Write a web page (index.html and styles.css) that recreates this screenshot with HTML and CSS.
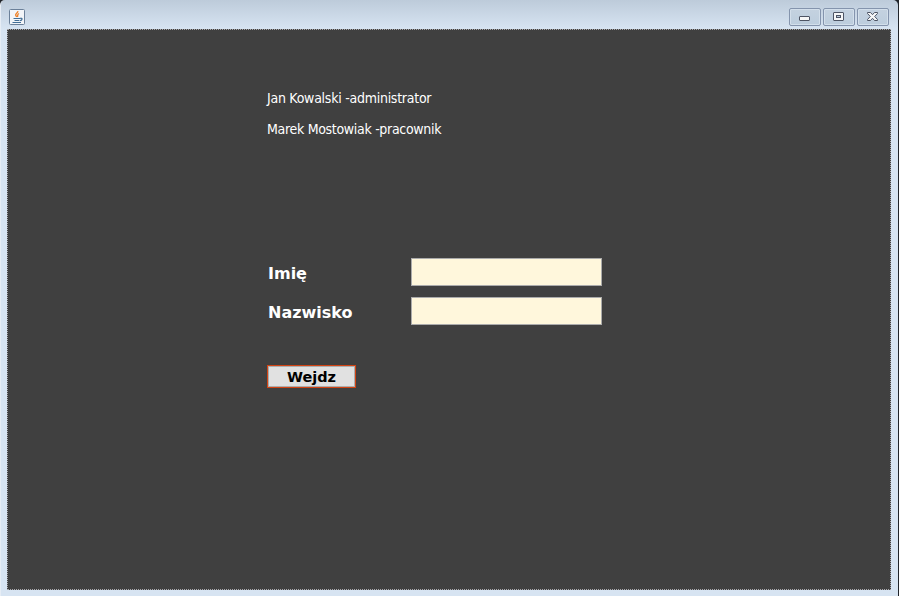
FILE: index.html
```html
<!DOCTYPE html>
<html lang="pl">
<head>
<meta charset="utf-8">
<title>Logowanie</title>
<link rel="stylesheet" href="styles.css">
</head>
<body>
<div class="window">
  <header class="titlebar">
    <svg class="app-icon" width="16" height="16" viewBox="0 0 16 16" aria-hidden="true">
      <rect x=".5" y=".5" width="15" height="15" rx="1" fill="#f3f5f8" stroke="#6b8099"/>
      <path d="M8.8 2.2C9.2 4 6.2 4.5 6.7 6.2C6.9 7 7.6 7.2 7.3 8M10 4.5C7.7 5.7 9.2 6.5 8.4 8" fill="none" stroke="#ee8128" stroke-width="1.4"/>
      <path d="M4.5 9.5H11M5.5 11.5H10.2M3.5 13.5H12M11 9.4C14 8.5 13.5 11.5 10.8 11.7" fill="none" stroke="#426f97" stroke-width="1.2"/>
    </svg>
    <div class="controls">
      <button class="control" aria-label="Minimalizuj">
        <svg width="14" height="12" viewBox="0 0 14 12"><rect x="1.5" y="5.5" width="10" height="4" rx=".5" fill="#f5f6f7" stroke="#4d5464"/></svg>
      </button>
      <button class="control" aria-label="Maksymalizuj">
        <svg width="14" height="12" viewBox="0 0 14 12"><rect x="1.5" y="1.5" width="10" height="8" rx=".5" fill="#f5f6f7" stroke="#4d5464"/><rect x="4.5" y="4.5" width="4" height="2" fill="#b9c9da" stroke="#4d5464"/></svg>
      </button>
      <button class="control" aria-label="Zamknij">
        <svg width="14" height="12" viewBox="0 0 14 12"><path d="M1.5 1.5H4.5L6.5 3.7L8.5 1.5H11.5V2.5L8.7 5.5L11.5 8.5V9.5H8.5L6.5 7.3L4.5 9.5H1.5V8.5L4.3 5.5L1.5 2.5Z" fill="#f5f6f7" stroke="#4d5464"/></svg>
      </button>
    </div>
  </header>
  <main class="content">
    <p class="user user-admin">Jan Kowalski -administrator</p>
    <p class="user user-worker">Marek Mostowiak -pracownik</p>
    <form class="login">
      <div class="row">
        <label for="first">Imię</label>
        <input id="first" type="text">
      </div>
      <div class="row">
        <label for="last">Nazwisko</label>
        <input id="last" type="text">
      </div>
      <button class="submit" type="button">Wejdz</button>
    </form>
  </main>
</div>
</body>
</html>
```
FILE: styles.css
```css
* { box-sizing: border-box; }
body { margin: 0; background: #20242a; overflow: hidden; }
.window {
  width: 898px; height: 596px; padding: 0 7px 6px 6px;
  border-left: 1px solid #e6edf5;
  border-radius: 5px 5px 0 0;
  background: linear-gradient(#bdcbda, #d7e4f2 29px);
}
.titlebar { height: 29px; display: flex; justify-content: space-between; align-items: flex-start; padding: 8px 2px 0; }
.app-icon { margin-top: 1px; }
.controls { display: flex; gap: 2px; }
.control {
  width: 32px; height: 18px; padding: 0; border: 1px solid #8494ad; border-radius: 2px;
  background: linear-gradient(#c4d2e0, #bccddd); box-shadow: inset 0 0 0 1px #d3dfeb;
  display: flex; align-items: center; justify-content: center;
}
.content {
  height: 561px; padding: 60px 0 0 259px; border: 1px dotted #a8a8ac;
  background: #404040; color: #fff;
}
.user { margin: 0; height: 31px; line-height: 17px; font-family: "DejaVu Sans Condensed", "DejaVu Sans", sans-serif; font-size: 14px; white-space: nowrap; }
.user-admin { letter-spacing: -.26px; }
.user-worker { letter-spacing: -.31px; }
.login { margin-top: 106px; }
.row { display: flex; align-items: center; height: 28px; margin-bottom: 11px; padding-left: 1px; }
label { width: 143px; font: bold 16px/20px "DejaVu Sans", sans-serif; padding-top: 4px; }
input { width: 191px; height: 28px; border: 1px solid #ababab; background: #fff7dc; padding: 0 4px; outline: 0; }
.submit {
  display: block; width: 89px; height: 23px; margin: 40px 0 0; padding: 0;
  border: 1px solid #d34312; background: #e1e1e1; box-shadow: inset 0 0 0 1px #adadad;
  color: #000; font: bold 14.5px/20px "DejaVu Sans", sans-serif;
}
```
